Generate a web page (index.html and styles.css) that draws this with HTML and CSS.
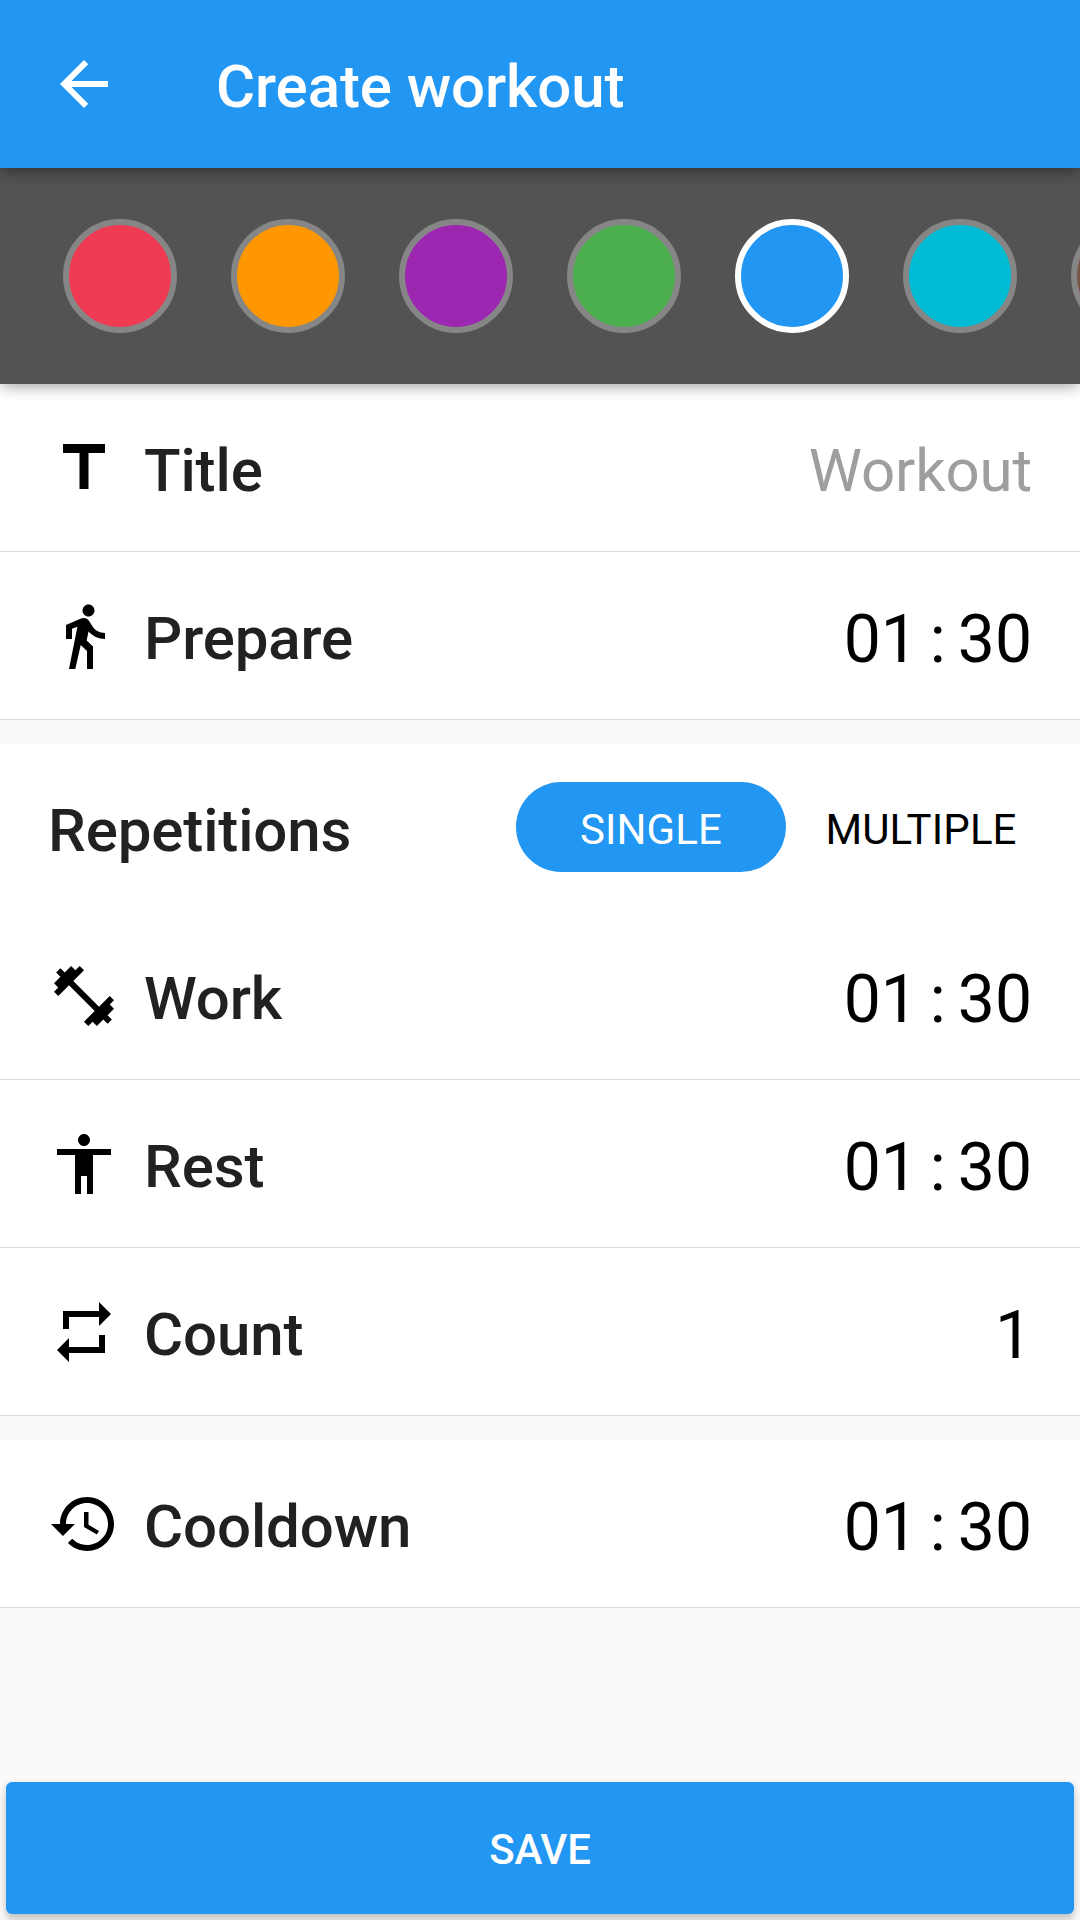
FILE: index.html
```html
<!DOCTYPE html>
<html lang="en">
<head>
<meta charset="utf-8">
<title>Create workout</title>
<link rel="stylesheet" href="styles.css">
</head>
<body>
<div class="screen">
  <header class="appbar">
    <svg class="icon" viewBox="0 0 24 24"><path d="M20 11H7.83l5.59-5.59L12 4l-8 8 8 8 1.41-1.41L7.83 13H20v-2z"/></svg>
    <h1 class="appbar-title">Create workout</h1>
  </header>
  <div class="palette">
    <span class="swatch red"></span>
    <span class="swatch orange"></span>
    <span class="swatch purple"></span>
    <span class="swatch green"></span>
    <span class="swatch blue selected"></span>
    <span class="swatch cyan"></span>
    <span class="swatch brown"></span>
  </div>
  <main class="form">
    <section class="group">
      <div class="row">
        <svg class="icon" viewBox="0 0 24 24"><path d="M5 4v3h5.5v12h3V7H19V4z"/></svg>
        <span class="label">Title</span>
        <span class="hint">Workout</span>
      </div>
      <div class="row">
        <svg class="icon" viewBox="0 0 24 24"><path d="M13.5 5.5c1.1 0 2-.9 2-2s-.9-2-2-2-2 .9-2 2 .9 2 2 2zM9.8 8.9L7 23h2.1l1.8-8 2.1 2v6h2v-7.5l-2.1-2 .6-3C14.8 12 16.8 13 19 13v-2c-1.9 0-3.5-1-4.3-2.4l-1-1.6c-.4-.6-1-1-1.7-1-.3 0-.5.1-.8.1L6 8.3V13h2V9.6l1.8-.7"/></svg>
        <span class="label">Prepare</span>
        <span class="value">01<span class="colon">:</span>30</span>
      </div>
    </section>
    <section class="group">
      <div class="row plain">
        <span class="label">Repetitions</span>
        <div class="tabs">
          <span class="tab active">SINGLE</span>
          <span class="tab">MULTIPLE</span>
        </div>
      </div>
      <div class="row">
        <svg class="icon" viewBox="0 0 24 24"><path d="M20.57 14.86L22 13.43 20.57 12 17 15.57 8.43 7 12 3.43 10.57 2 9.14 3.43 7.71 2 5.57 4.14 4.14 2.71 2.71 4.14l1.43 1.43L2 7.71l1.43 1.43L2 10.57 3.43 12 7 8.43 15.57 17 12 20.57 13.43 22l1.43-1.43L16.29 22l2.14-2.14 1.43 1.43 1.43-1.43-1.43-1.43L22 16.29z"/></svg>
        <span class="label">Work</span>
        <span class="value">01<span class="colon">:</span>30</span>
      </div>
      <div class="row">
        <svg class="icon" viewBox="0 0 24 24"><path d="M12 2c1.1 0 2 .9 2 2s-.9 2-2 2-2-.9-2-2 .9-2 2-2zm9 7h-6v13h-2v-6h-2v6H9V9H3V7h18v2z"/></svg>
        <span class="label">Rest</span>
        <span class="value">01<span class="colon">:</span>30</span>
      </div>
      <div class="row">
        <svg class="icon" viewBox="0 0 24 24"><path d="M7 7h10v3l4-4-4-4v3H5v6h2V7zm10 10H7v-3l-4 4 4 4v-3h12v-6h-2v4z"/></svg>
        <span class="label">Count</span>
        <span class="value">1</span>
      </div>
    </section>
    <section class="group">
      <div class="row">
        <svg class="icon" viewBox="0 0 24 24"><path d="M13 3c-4.97 0-9 4.03-9 9H1l3.89 3.89.07.14L9 12H6c0-3.87 3.13-7 7-7s7 3.13 7 7-3.13 7-7 7c-1.93 0-3.68-.79-4.94-2.06l-1.42 1.42C8.27 19.99 10.51 21 13 21c4.97 0 9-4.03 9-9s-4.03-9-9-9zm-1 5v5l4.28 2.54.72-1.21-3.5-2.08V8H12z"/></svg>
        <span class="label">Cooldown</span>
        <span class="value">01<span class="colon">:</span>30</span>
      </div>
    </section>
  </main>
  <button class="save" type="button">SAVE</button>
</div>
</body>
</html>
```
FILE: styles.css
```css
* {
  box-sizing: border-box;
}

body {
  margin: 0;
  font-family: Roboto, sans-serif;
  background: #fafafa;
}

.screen {
  display: flex;
  flex-direction: column;
  width: 1080px;
  height: 1920px;
  padding-bottom: 6px;
  overflow: hidden;
}

.icon {
  flex: none;
  width: 72px;
  height: 72px;
  fill: currentColor;
}

.appbar {
  z-index: 2;
  display: flex;
  flex: none;
  align-items: center;
  gap: 96px;
  height: 168px;
  padding: 0 48px;
  background: #2196f3;
  color: #fff;
  box-shadow: 0 6px 12px -3px rgba(0, 0, 0, 0.2), 0 3px 15px rgba(0, 0, 0, 0.26);
}

.appbar-title {
  margin: 0;
  padding-top: 6px;
  font-size: 60px;
  font-weight: 500;
  letter-spacing: -0.1px;
  line-height: 72px;
}

.palette {
  z-index: 1;
  display: flex;
  flex: none;
  align-items: center;
  gap: 54px;
  height: 216px;
  padding-left: 63px;
  background: #535353;
  box-shadow: 0 6px 12px -3px rgba(0, 0, 0, 0.2), 0 3px 15px rgba(0, 0, 0, 0.16);
}

.swatch {
  flex: none;
  width: 114px;
  height: 114px;
  border: 6px solid #868686;
  border-radius: 50%;
}

.selected { border-color: #fff; }
.red { background: #ee3a52; }
.orange { background: #ff9800; }
.purple { background: #9c27b0; }
.green { background: #4caf50; }
.blue { background: #2196f3; }
.cyan { background: #00bcd4; }
.brown { background: #795548; }

.form {
  display: flex;
  flex: 1;
  flex-direction: column;
  gap: 24px;
}

.group {
  background: #fff;
}

.row {
  display: flex;
  align-items: center;
  gap: 24px;
  height: 168px;
  padding: 1px 48px 0;
  border-bottom: 1px solid #dedede;
  color: #000;
}

.row.plain {
  padding-top: 0;
  padding-right: 24px;
  border-bottom: 0;
}

.label {
  flex: 1;
  padding-top: 6px;
  color: #212121;
  font-size: 60px;
  font-weight: 500;
  letter-spacing: -0.12px;
  line-height: 72px;
}

.hint {
  padding-top: 6px;
  color: #9e9e9e;
  font-size: 60px;
  letter-spacing: -0.15px;
  line-height: 72px;
}

.value {
  padding-top: 8px;
  font-size: 66px;
  line-height: 78px;
}

.colon {
  margin: 0 12px;
}

.tabs {
  display: flex;
  padding-bottom: 2px;
}

.tab {
  width: 270px;
  height: 90px;
  padding-top: 3px;
  border-radius: 45px;
  font-size: 42px;
  letter-spacing: 0.1px;
  line-height: 90px;
  text-align: center;
}

.tab.active {
  background: #2196f3;
  color: #fff;
}

.save {
  flex: none;
  height: 132px;
  margin: 0 6px;
  padding: 3px 0 0;
  border: 0;
  border-radius: 6px;
  background: #2196f3;
  box-shadow: 0 6px 9px rgba(0, 0, 0, 0.2), 0 1px 6px rgba(0, 0, 0, 0.06);
  color: #fff;
  font-family: inherit;
  font-size: 42px;
  font-weight: 500;
  letter-spacing: -0.2px;
}
```
